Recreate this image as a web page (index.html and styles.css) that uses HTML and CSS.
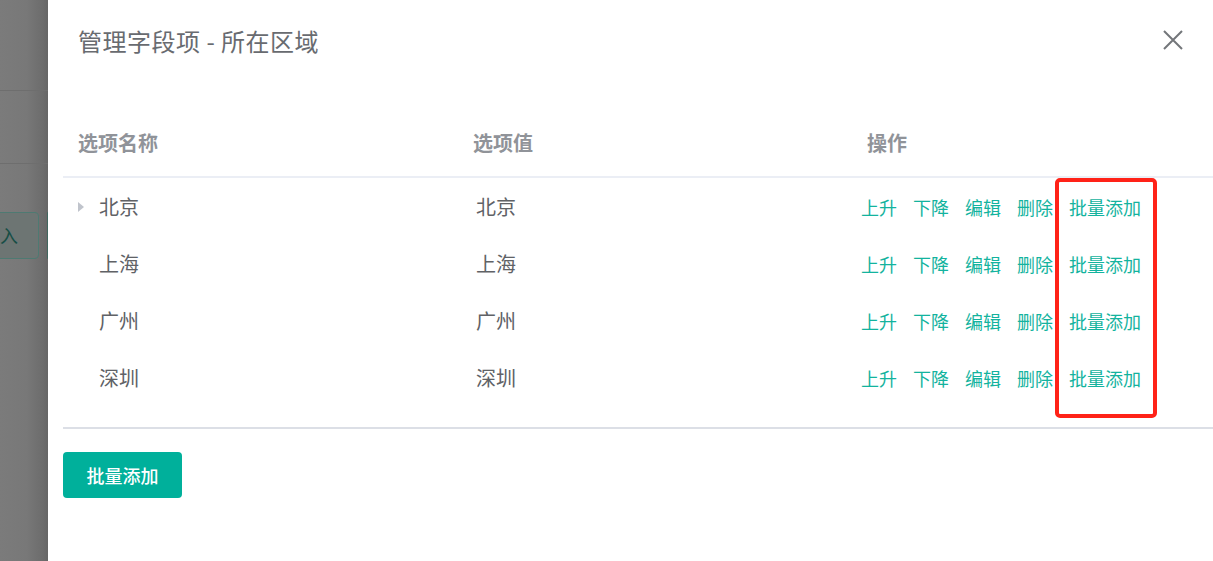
FILE: index.html
```html
<!DOCTYPE html>
<html lang="zh-CN">
<head>
<meta charset="utf-8">
<title>管理字段项 - 所在区域</title>
<link rel="stylesheet" href="styles.css">
</head>
<body>
<div class="screen">
  <div class="behind">
    <div class="behind-line first"></div>
    <div class="behind-line second"></div>
    <div class="behind-buttons">
      <span class="behind-btn">入</span>
      <span class="behind-btn2"></span>
    </div>
  </div>
  <div class="drawer">
    <div class="drawer-header">
      <span class="drawer-title">管理字段项 - 所在区域</span>
      <svg class="close" width="20" height="20" viewBox="0 0 20 20"><path d="M1 1L19 19M19 1L1 19" stroke="#73767a" stroke-width="2" fill="none"/></svg>
    </div>
    <div class="table">
      <div class="row head">
        <div class="cell">选项名称</div>
        <div class="cell">选项值</div>
        <div class="cell">操作</div>
      </div>
      <div class="tbody">
        <div class="row">
          <div class="cell name"><span class="caret"></span>北京</div>
          <div class="cell val">北京</div>
          <div class="cell ops"><a>上升</a><a>下降</a><a>编辑</a><a>删除</a><a>批量添加</a></div>
        </div>
        <div class="row">
          <div class="cell name"><span class="caret blank"></span>上海</div>
          <div class="cell val">上海</div>
          <div class="cell ops"><a>上升</a><a>下降</a><a>编辑</a><a>删除</a><a>批量添加</a></div>
        </div>
        <div class="row">
          <div class="cell name"><span class="caret blank"></span>广州</div>
          <div class="cell val">广州</div>
          <div class="cell ops"><a>上升</a><a>下降</a><a>编辑</a><a>删除</a><a>批量添加</a></div>
        </div>
        <div class="row">
          <div class="cell name"><span class="caret blank"></span>深圳</div>
          <div class="cell val">深圳</div>
          <div class="cell ops"><a>上升</a><a>下降</a><a>编辑</a><a>删除</a><a>批量添加</a></div>
        </div>
        <div class="highlight"></div>
      </div>
    </div>
    <button class="primary">批量添加</button>
  </div>
</div>
</body>
</html>
```
FILE: styles.css
```css
* { box-sizing: border-box; }
html, body { margin: 0; padding: 0; }
body {
  width: 1213px;
  height: 561px;
  overflow: hidden;
  font-family: "Noto Sans CJK SC", "Noto Sans", sans-serif;
  background: #fff;
}
.screen {
  display: flex;
  width: 1213px;
  height: 561px;
}
.behind {
  width: 48px;
  flex: none;
  overflow: hidden;
  background: linear-gradient(to right, #7b7b7b 0%, #787878 55%, #6c6c6c 90%, #666 100%);
  display: flex;
  flex-direction: column;
}
.behind-line {
  height: 1px;
  background: #6e6e6e;
}
.behind-line.first { margin-top: 90px; }
.behind-line.second { margin-top: 72px; }
.behind-buttons {
  margin-top: 48px;
  display: flex;
  height: 47px;
}
.behind-btn {
  width: 49px;
  flex: none;
  margin-left: -10px;
  height: 47px;
  border: 1px solid #4e7a72;
  border-radius: 4px;
  background: #6d7573;
  color: #174e45;
  font-size: 18px;
  line-height: 45px;
  text-align: right;
  padding-right: 20px;
}
.behind-btn2 {
  margin-left: 8px;
  width: 10px;
  height: 47px;
  background: #41675f;
  border-radius: 3px 0 0 3px;
}
.drawer {
  flex: 1;
  background: #fff;
  display: flex;
  flex-direction: column;
}
.drawer-header {
  height: 84px;
  display: flex;
  align-items: center;
  justify-content: space-between;
  padding-left: 30px;
  padding-right: 30px;
}
.drawer-title {
  font-size: 24px;
  color: #686b70;
  letter-spacing: 0.5px;
  margin-top: -3px;
}
.close { display: block; margin-top: -5px; }
.table {
  margin-left: 15px;
  margin-top: 24px;
}
.row {
  display: grid;
  grid-template-columns: 395px 394px 1fr;
  height: 57px;
  align-items: center;
}
.row.head {
  height: 70px;
  border-bottom: 2px solid #ebeef5;
}
.head .cell {
  font-size: 20px;
  font-weight: 700;
  color: #909399;
  padding-left: 15px;
}
.tbody {
  position: relative;
  padding-bottom: 21px;
  border-bottom: 2px solid #dcdfe6;
}
.cell {
  font-size: 20px;
  color: #606266;
  white-space: nowrap;
}
.name {
  display: flex;
  align-items: center;
  padding-left: 15px;
}
.caret {
  width: 0;
  height: 0;
  border-left: 6px solid #c0c4cc;
  border-top: 5px solid transparent;
  border-bottom: 5px solid transparent;
  margin-right: 15px;
}
.caret.blank { border-left-color: transparent; }
.val { padding-left: 18px; }
.ops {
  padding-left: 9px;
  display: flex;
  gap: 16px;
}
.ops a {
  color: #13b39e;
  font-size: 18px;
  cursor: pointer;
}
.highlight {
  position: absolute;
  left: 992px;
  top: 0;
  width: 102px;
  height: 240px;
  border: 4px solid #ff2218;
  border-radius: 5px;
  pointer-events: none;
}
.primary {
  margin-left: 15px;
  margin-top: 23px;
  width: 119px;
  height: 46px;
  border: none;
  border-radius: 4px;
  background: #00b09b;
  color: #fff;
  font-family: "Noto Sans CJK SC", sans-serif;
  font-size: 18px;
  font-weight: 500;
  align-self: flex-start;
}
```
